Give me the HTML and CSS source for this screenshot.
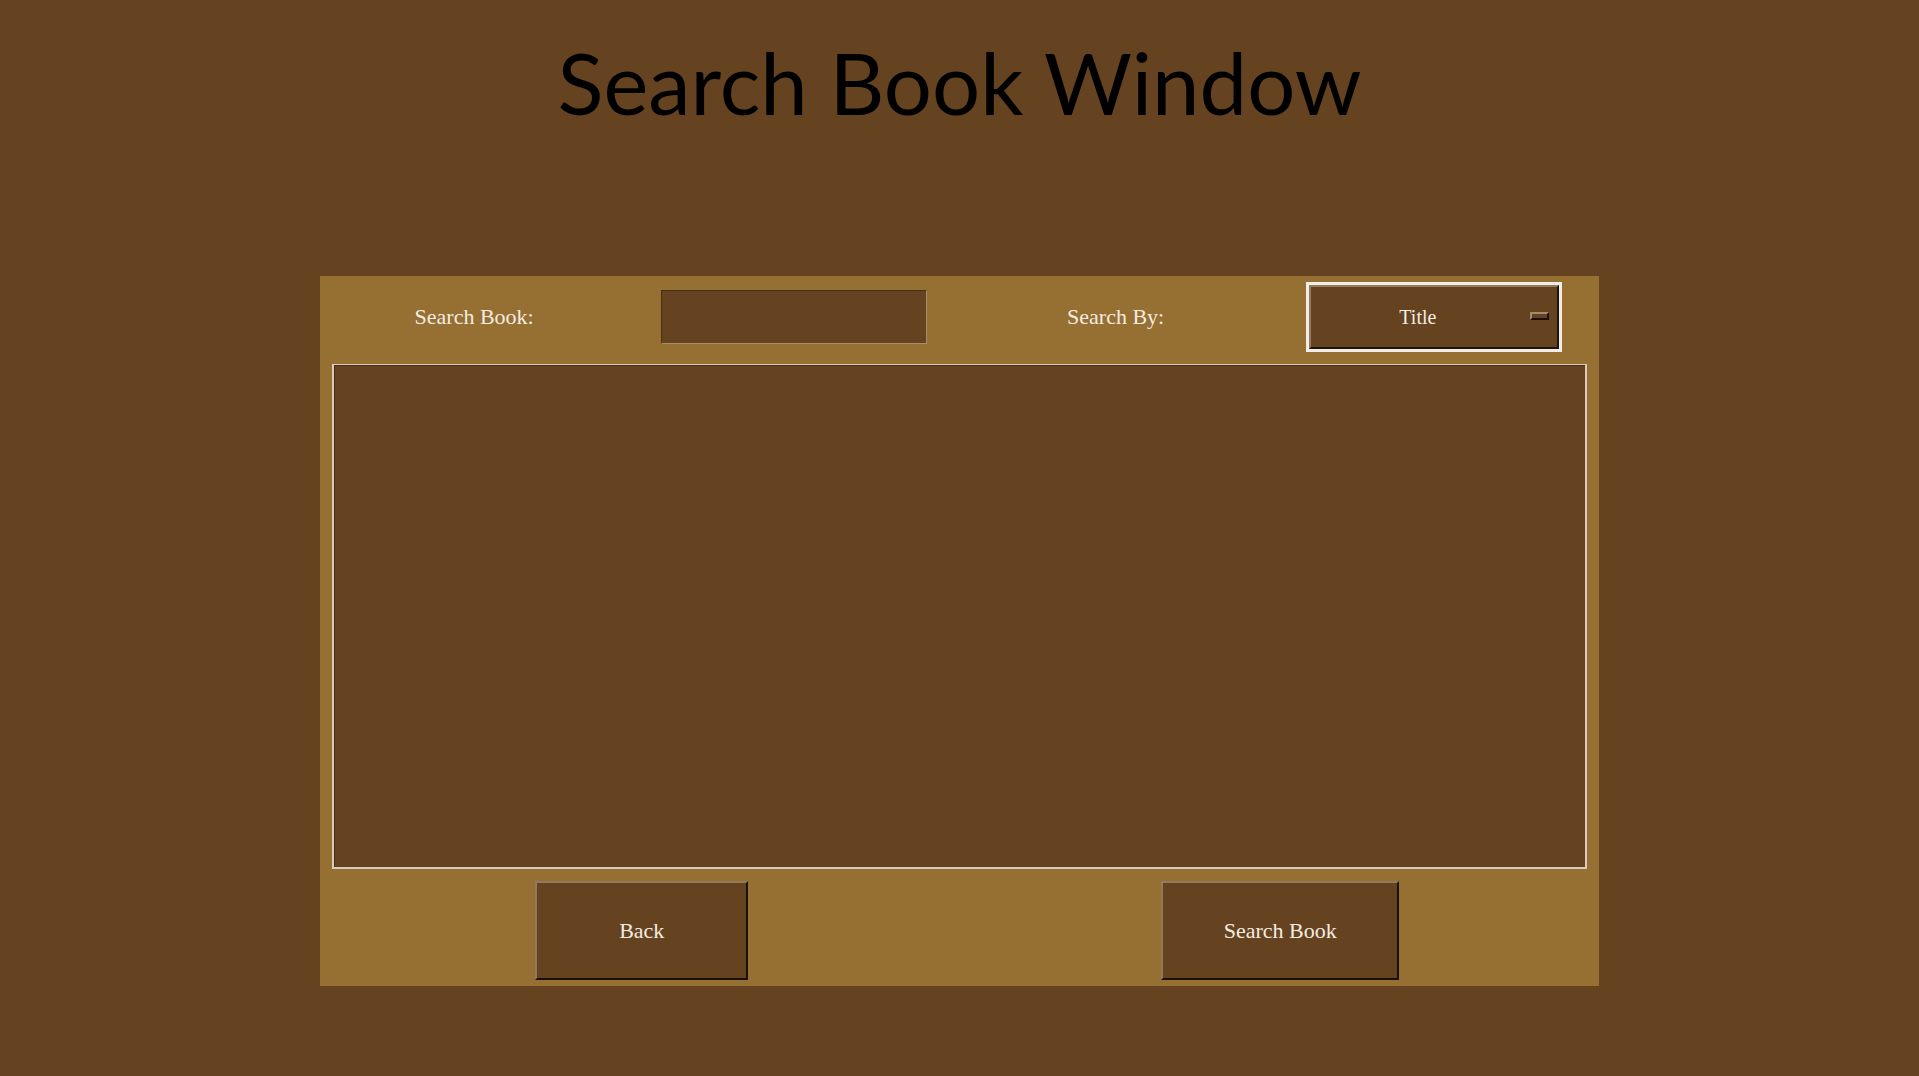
FILE: index.html
```html
<!DOCTYPE html>
<html lang="en">
<head>
<meta charset="utf-8">
<title>Search Book Window</title>
<link rel="stylesheet" href="styles.css">
</head>
<body>
<h1 class="title">Search Book Window</h1>
<form class="panel">
  <div class="filters">
    <label for="query">Search Book:</label>
    <input class="query" id="query" type="text">
    <label for="field">Search By:</label>
    <div class="option">
      <select class="option-select" id="field">
        <option>Title</option>
      </select>
      <span class="option-mark"></span>
    </div>
  </div>
  <textarea class="results" aria-label="Results" readonly></textarea>
  <div class="actions">
    <button class="button" type="button">Back</button>
    <button class="button button-search" type="button">Search Book</button>
  </div>
</form>
</body>
</html>
```
FILE: styles.css
```css
* {
  box-sizing: border-box;
}

body {
  margin: 0;
  background: #654321;
  color: #f4ece0;
  font-family: Gabriola, "Liberation Serif", serif;
  font-size: 22px;
  line-height: 32px;
}

.title {
  margin: 0;
  padding: 22px 0 134px;
  color: #000;
  font-family: Papyrus, Lato, sans-serif;
  font-size: 85px;
  font-weight: 400;
  line-height: 120px;
  text-align: center;
}

.panel {
  width: 66.7%;
  margin: 0 auto;
  padding: 6px 0;
  background: #966f33;
}

.filters {
  display: grid;
  grid-template-columns: 304fr 338fr 306fr 332fr;
  align-items: center;
  justify-items: center;
  padding-left: 3px;
}

.query {
  width: 266px;
  height: 54px;
  padding: 0 8px;
  border: 1px solid;
  border-color: #46301a #a98c6c #a98c6c #46301a;
  border-radius: 0;
  background: #654321;
  color: inherit;
  font: inherit;
}

.option {
  position: relative;
  width: 256px;
  border: 3px solid #f0ede8;
}

.option-select {
  display: block;
  width: 100%;
  height: 64px;
  padding: 0 32px 0 0;
  appearance: none;
  border: 2px solid;
  border-color: #93795e #1e140a #1e140a #93795e;
  border-radius: 0;
  background: #654321;
  color: inherit;
  font: inherit;
  font-size: 20px;
  text-align: center;
  text-align-last: center;
}

.option-mark {
  position: absolute;
  top: 27px;
  right: 10px;
  width: 19px;
  height: 8px;
  border: 2px solid;
  border-color: #a58a70 #1a1008 #1a1008 #a58a70;
  pointer-events: none;
}

.results {
  display: block;
  width: calc(100% - 24px);
  height: 505px;
  margin: 12px;
  padding: 8px;
  border: 2px solid #d8cbc0;
  border-top-width: 1px;
  border-radius: 0;
  outline: none;
  background: #654321;
  box-shadow: inset 1px 1px #46301a;
  color: inherit;
  font: inherit;
  resize: none;
}

.actions {
  display: grid;
  grid-template-columns: 1fr 1fr;
  justify-items: center;
  padding-left: 3px;
}

.button {
  width: 213px;
  height: 99px;
  padding: 0;
  border: 2px solid;
  border-color: #93795e #1a1008 #1a1008 #93795e;
  border-radius: 0;
  background: #654321;
  color: inherit;
  font: inherit;
}

.button-search {
  width: 238px;
}
```
